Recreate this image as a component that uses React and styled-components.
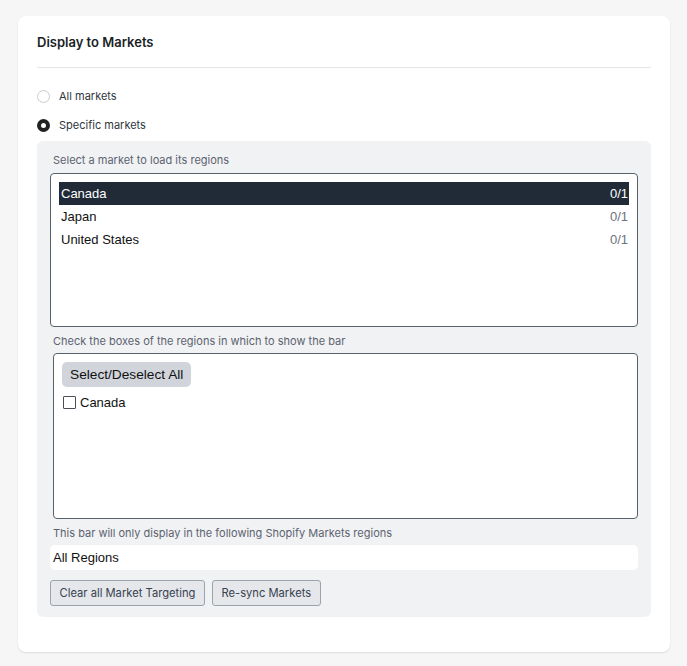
import React, { useState } from "react"
import styled, { createGlobalStyle } from "styled-components"

const GlobalStyle = createGlobalStyle`
  body {
    margin: 0;
    background-color: #f6f6f7;
    font-family: Inter, "Liberation Sans", Arial, sans-serif;
  }
`

const Page = styled.div`
  padding: 16px 17px 14px 18px;
`

const Card = styled.div`
  background-color: white;
  border-radius: 8px;
  box-shadow: 0 1px 2px rgba(0, 0, 0, 0.1);
  padding: 16px 19px 35px;
`

const Header = styled.div`
  border-bottom: 1px solid #e3e5e8;
  padding-bottom: 15px;
`

const Title = styled.h2`
  margin: 0;
  font-size: 13px;
  line-height: 20px;
  font-weight: 600;
  color: #1a1f27;
`

const RadioList = styled.div`
  display: flex;
  flex-direction: column;
  gap: 9px;
  margin-top: 18px;
`

const RadioRow = styled.label`
  display: flex;
  align-items: center;
  gap: 9px;
  height: 20px;
  font-size: 11px;
  color: #303640;
  cursor: pointer;
`

const RadioDot = styled.span`
  box-sizing: border-box;
  width: 13px;
  height: 13px;
  border-radius: 50%;
  background-color: white;
  border: ${(p) => (p.checked ? "4px solid #202223" : "1px solid #c9cccf")};
`

const Panel = styled.div`
  margin-top: 6px;
  background-color: #f1f2f4;
  border-radius: 6px;
  padding: 11px 13px 11px;
`

const Label = styled.div`
  font-size: 11px;
  line-height: 16px;
  color: #5c6370;
  margin: ${(p) => p.margin || "0 0 5px 3px"};
`

const ListBox = styled.div`
  height: 154px;
  box-sizing: border-box;
  background-color: white;
  border: 1px solid #56616b;
  border-radius: 4px;
  padding: 8px;
`

const ListRow = styled.div`
  display: flex;
  justify-content: space-between;
  align-items: center;
  height: 23px;
  padding: 0 1px 0 2px;
  font-family: "Liberation Sans", Arial, sans-serif;
  font-size: 13px;
  color: ${(p) => (p.selected ? "white" : "#111")};
  background-color: ${(p) => (p.selected ? "#212a37" : "transparent")};
  cursor: pointer;
`

const Count = styled.span`
  color: ${(p) => (p.selected ? "white" : "#6b7280")};
`

const RegionBox = styled.div`
  height: 166px;
  box-sizing: border-box;
  margin-left: 3px;
  background-color: white;
  border: 1px solid #56616b;
  border-radius: 4px;
  padding: 8px;
`

const GreyButton = styled.button`
  height: 25px;
  padding: 0 8px;
  border: none;
  border-radius: 5px;
  background-color: #d1d5db;
  font-family: "Liberation Sans", Arial, sans-serif;
  font-size: 13.7px;
  color: #111;
  cursor: pointer;
`

const CheckRow = styled.label`
  display: flex;
  align-items: center;
  gap: 4px;
  margin-top: 7px;
  height: 16px;
  font-family: "Liberation Sans", Arial, sans-serif;
  font-size: 13px;
  color: #111;
`

const CheckBox = styled.span`
  box-sizing: border-box;
  width: 13px;
  height: 13px;
  margin-left: 1px;
  border: 1px solid #4b5058;
  border-radius: 1px;
  background-color: ${(p) => (p.checked ? "#212a37" : "white")};
`

const Field = styled.div`
  height: 25px;
  display: flex;
  align-items: center;
  padding-left: 3px;
  background-color: white;
  border-radius: 5px;
  font-family: "Liberation Sans", Arial, sans-serif;
  font-size: 13px;
  color: #111;
`

const ButtonRow = styled.div`
  display: flex;
  gap: 7px;
  margin-top: 10px;
`

const OutlineButton = styled.button`
  height: 26px;
  padding: 0 8.5px;
  background-color: #e5e7eb;
  border: 1px solid #9ca3af;
  border-radius: 3px;
  font-family: Inter, sans-serif;
  font-size: 11.2px;
  font-weight: 400;
  color: #374151;
  cursor: pointer;
`

const markets = [
  { name: "Canada", count: "0/1" },
  { name: "Japan", count: "0/1" },
  { name: "United States", count: "0/1" },
]

export default function App() {
  const [mode, setMode] = useState("specific")
  const [market, setMarket] = useState("Canada")
  const [checked, setChecked] = useState(false)

  return (
    <Page>
      <GlobalStyle />
      <Card>
        <Header>
          <Title>Display to Markets</Title>
        </Header>
        <RadioList>
          <RadioRow onClick={() => setMode("all")}>
            <RadioDot checked={mode === "all"} />
            All markets
          </RadioRow>
          <RadioRow onClick={() => setMode("specific")}>
            <RadioDot checked={mode === "specific"} />
            Specific markets
          </RadioRow>
        </RadioList>
        <Panel>
          <Label>Select a market to load its regions</Label>
          <ListBox>
            {markets.map((m) => (
              <ListRow
                key={m.name}
                selected={market === m.name}
                onClick={() => setMarket(m.name)}
              >
                <span>{m.name}</span>
                <Count selected={market === m.name}>{m.count}</Count>
              </ListRow>
            ))}
          </ListBox>
          <Label margin="6px 0 4px 3px">
            Check the boxes of the regions in which to show the bar
          </Label>
          <RegionBox>
            <GreyButton onClick={() => setChecked(!checked)}>
              Select/Deselect All
            </GreyButton>
            <CheckRow onClick={() => setChecked(!checked)}>
              <CheckBox checked={checked} />
              {market}
            </CheckRow>
          </RegionBox>
          <Label margin="6px 0 4px 3px">
            This bar will only display in the following Shopify Markets regions
          </Label>
          <Field>All Regions</Field>
          <ButtonRow>
            <OutlineButton>Clear all Market Targeting</OutlineButton>
            <OutlineButton>Re-sync Markets</OutlineButton>
          </ButtonRow>
        </Panel>
      </Card>
    </Page>
  )
}
